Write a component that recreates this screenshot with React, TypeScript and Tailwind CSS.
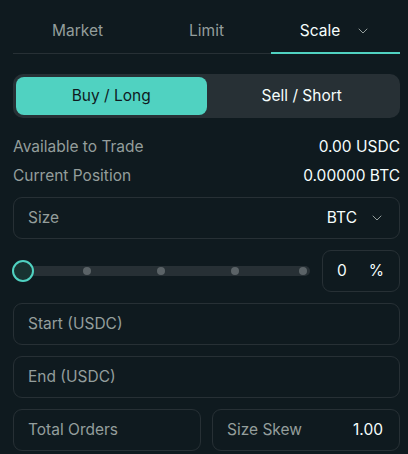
import { ChevronDown } from "lucide-react";

const font = { fontFamily: "Inter, 'Noto Sans', sans-serif" };

function Box({ children, className = "" }: { children: React.ReactNode; className?: string }) {
  return (
    <div className={`h-[42px] rounded-[9px] border border-[#273035] flex items-center ${className}`}>
      {children}
    </div>
  );
}

export default function App() {
  const tabs = ["Market", "Limit", "Scale"];
  return (
    <main className="w-[408px] h-[454px] overflow-hidden bg-[#0f1a1f] pl-[13px] pr-[8px] text-[15.5px] leading-[20px]" style={font}>
      {/* Order type tabs */}
      <div className="grid grid-cols-3">
        {tabs.map((t) => {
          const active = t === "Scale";
          return (
            <div key={t} className="flex flex-col">
              <div className={`h-[52px] pt-[9px] flex items-center justify-center gap-[15px] ${active ? "text-[#f6fefd]" : "text-[#949e9c]"}`}>
                <span>{t}</span>
                {active && <ChevronDown size={16} strokeWidth={1.5} className="text-[#949e9c]" />}
              </div>
              <div className="h-[2px] flex items-center">
                <div className={active ? "h-[2px] w-full bg-[#50d2c1]" : "h-[1px] w-full bg-[#273035]"} />
              </div>
            </div>
          );
        })}
      </div>

      {/* Side toggle */}
      <div className="mt-[20px] h-[44px] rounded-[10px] bg-[#273035] p-[3px] grid grid-cols-2">
        <button className="rounded-[8px] bg-[#50d2c1] text-[#0f1a1f]">Buy / Long</button>
        <button className="rounded-[8px] text-[#f6fefd]">Sell / Short</button>
      </div>

      {/* Account info */}
      <div className="mt-[19px] flex flex-col gap-[9px]">
        <div className="flex justify-between">
          <span className="text-[#949e9c]">Available to Trade</span>
          <span className="text-[#f6fefd]">0.00 USDC</span>
        </div>
        <div className="flex justify-between">
          <span className="text-[#949e9c]">Current Position</span>
          <span className="text-[#f6fefd]">0.00000 BTC</span>
        </div>
      </div>

      {/* Size */}
      <Box className="mt-[11px] h-[41px] pl-[14px] pr-[14px] justify-between">
        <span className="text-[#949e9c]">Size</span>
        <div className="flex items-center gap-[12px] text-[#f6fefd]">
          <span>BTC</span>
          <ChevronDown size={16} strokeWidth={1.5} className="text-[#949e9c]" />
        </div>
      </Box>

      {/* Slider */}
      <div className="mt-[11px] flex items-center gap-[12px]">
        <div className="relative flex-1 h-[42px] flex items-center">
          <div className="ml-[10px] h-[10px] flex-1 rounded-full bg-[#273035]" />
          {[74, 148, 222, 290].map((x) => (
            <div key={x} className="absolute top-[17px] h-[8px] w-[8px] rounded-full bg-[#5b6367]" style={{ left: x - 4 }} />
          ))}
          <div className="absolute left-[-1px] top-[10px] h-[22px] w-[22px] rounded-full border-[2.5px] border-[#50d2c1] bg-[#183331]" />
        </div>
        <Box className="w-[78px] pl-[14px] pr-[15px] justify-between text-[#f6fefd]">
          <span>0</span>
          <span>%</span>
        </Box>
      </div>

      {/* Price range */}
      <Box className="mt-[11px] pl-[14px]">
        <span className="text-[#949e9c]">Start (USDC)</span>
      </Box>
      <Box className="mt-[11px] pl-[14px]">
        <span className="text-[#949e9c]">End (USDC)</span>
      </Box>

      <div className="mt-[11px] grid grid-cols-2 gap-[11px]">
        <Box className="pl-[14px]">
          <span className="text-[#949e9c]">Total Orders</span>
        </Box>
        <Box className="pl-[14px] pr-[16px] justify-between">
          <span className="text-[#949e9c]">Size Skew</span>
          <span className="text-[#f6fefd]">1.00</span>
        </Box>
      </div>
    </main>
  );
}
